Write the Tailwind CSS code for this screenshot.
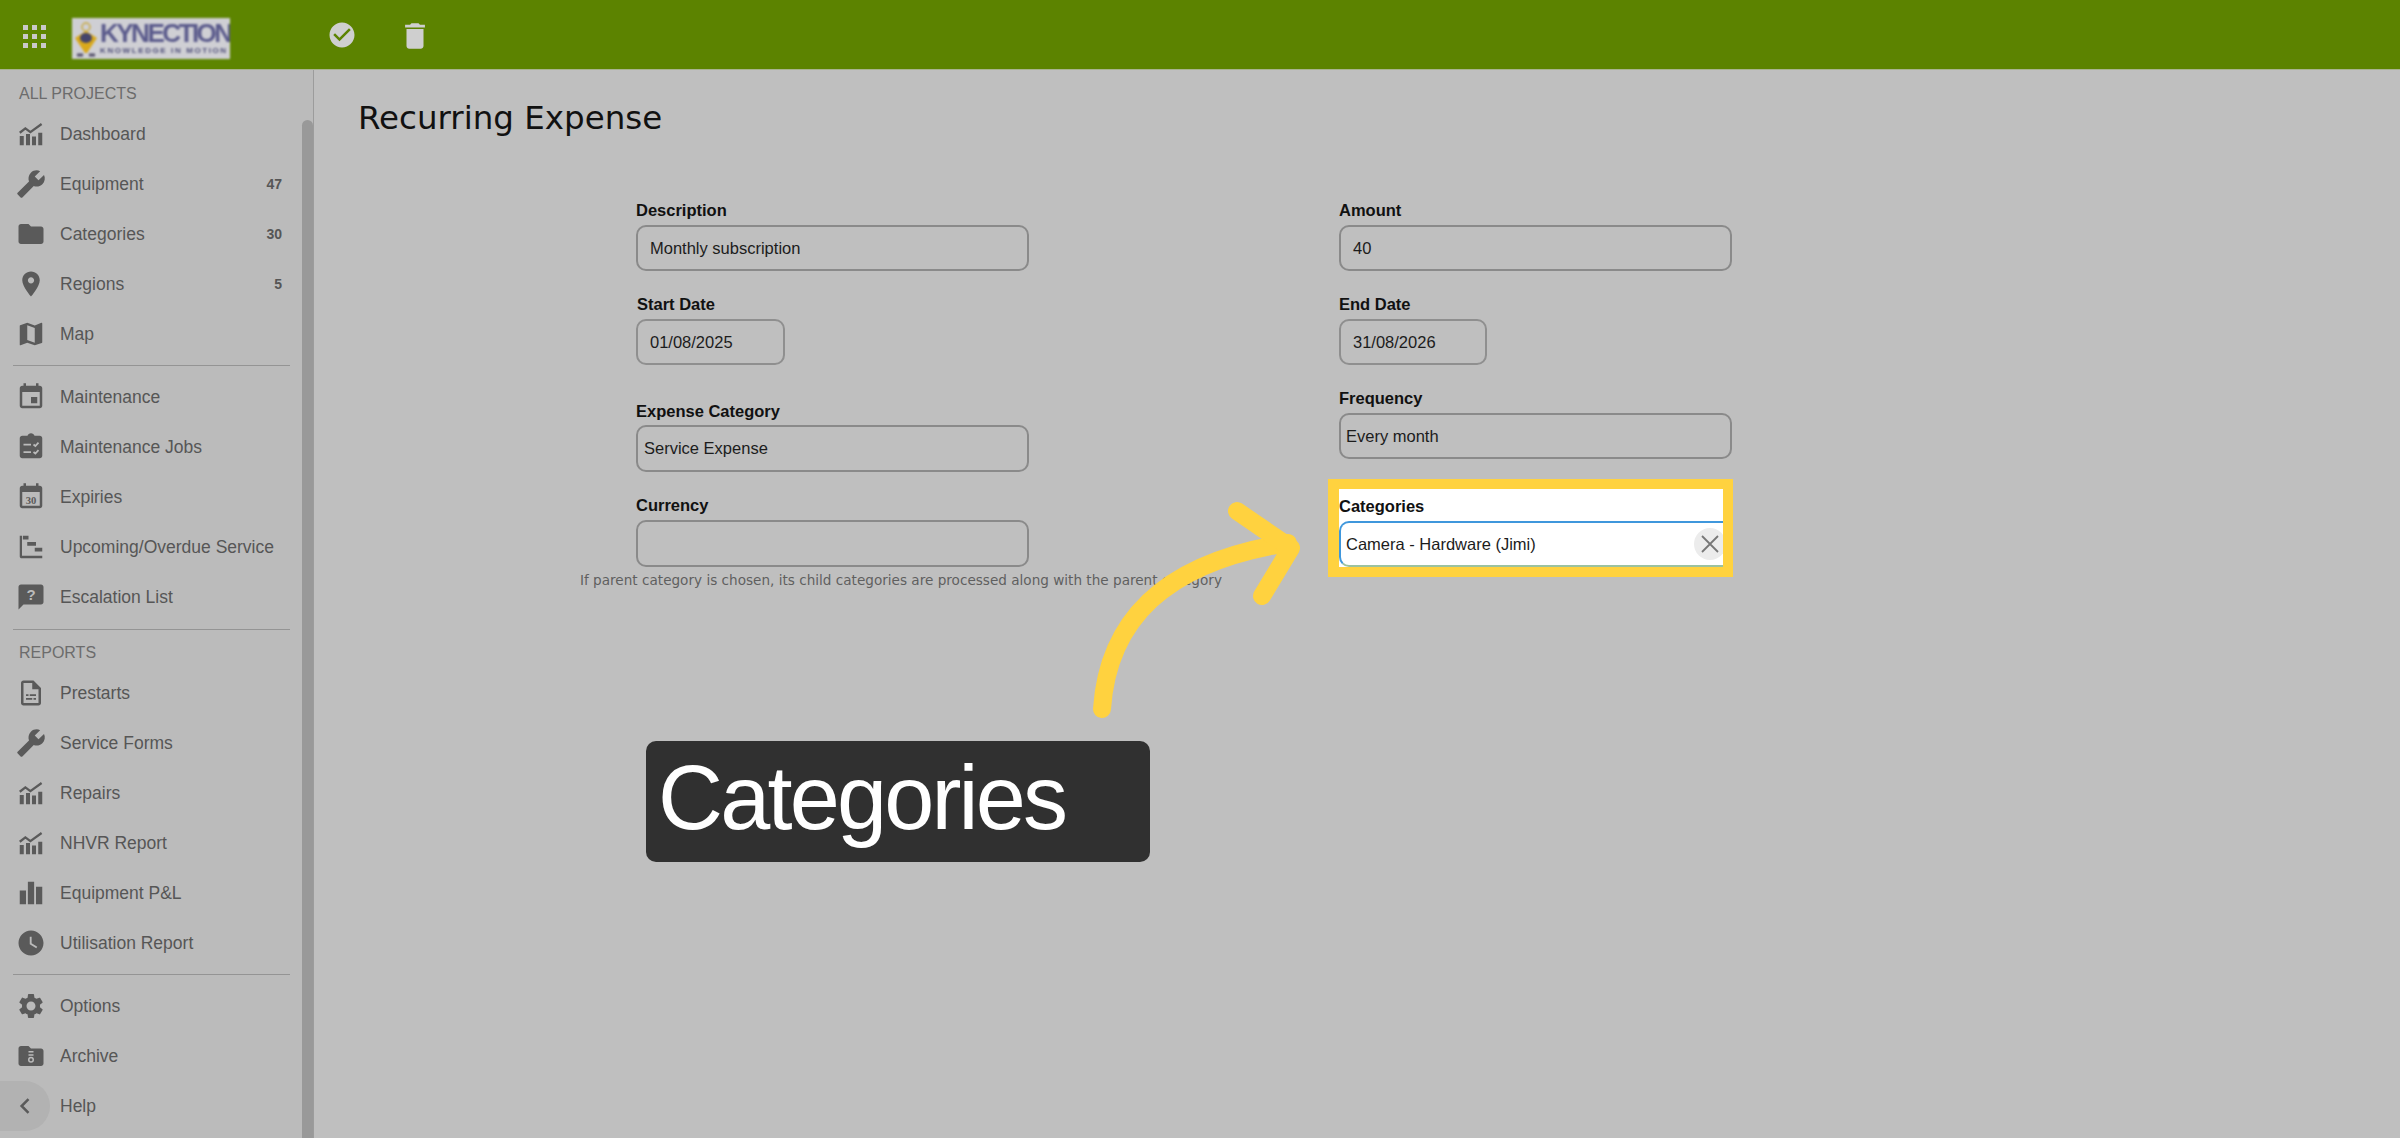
<!DOCTYPE html>
<html lang="en">
<head>
    <meta charset="UTF-8">
    <title>Recurring Expense</title>
    <script src="https://cdn.jsdelivr.net/npm/@tailwindcss/browser@4"></script>
</head>
<body class="font-['Liberation_Sans',Arial,sans-serif]">
<div class="relative flex h-[1138px] w-[2400px] flex-col overflow-hidden bg-[#bfbfbf]">

    <!-- top bar -->
    <header class="flex h-[70px] shrink-0 items-center border-b border-[#a9b38f] bg-[#5c8300]">
        <div class="flex h-full w-[290px] items-center bg-[#5d8500]">
            <svg class="mt-[3px] ml-[23px] h-[23px] w-[23px]" viewBox="0 0 23 23" fill="#c9c9c9">
                <rect x="0" y="0" width="5" height="5"/><rect x="9" y="0" width="5" height="5"/><rect x="18" y="0" width="5" height="5"/>
                <rect x="0" y="9" width="5" height="5"/><rect x="9" y="9" width="5" height="5"/><rect x="18" y="9" width="5" height="5"/>
                <rect x="0" y="18" width="5" height="5"/><rect x="9" y="18" width="5" height="5"/><rect x="18" y="18" width="5" height="5"/>
            </svg>
            <div class="mt-[7px] ml-[26px] flex h-[41px] w-[158px] items-center overflow-hidden bg-[#cfcfd4] blur-[1px]">
                <svg class="ml-[1px] h-[38px] w-[26px] shrink-0" viewBox="0 0 26 38">
                    <circle cx="13" cy="8" r="4" fill="none" stroke="#c9a93c" stroke-width="1.5"/>
                    <path d="M2 19 L13 12 L24 19 L14 34 L12 34 Z" fill="#d9a91c"/>
                    <ellipse cx="13" cy="19" rx="6" ry="5" fill="#45456b"/>
                    <path d="M4 36h6M16 36h6" stroke="#55506a" stroke-width="3"/>
                </svg>
                <div class="ml-[1px] flex flex-col">
                    <span class="text-[26px] leading-[25px] font-bold tracking-[-2.5px] whitespace-nowrap text-[#5b5b8c]">KYNECTION</span>
                    <span class="text-[8px] leading-[9px] font-bold tracking-[1.6px] whitespace-nowrap text-[#4d4d78]">KNOWLEDGE IN MOTION</span>
                </div>
            </div>
        </div>
        <svg class="ml-[37px] h-[30px] w-[30px]" viewBox="0 0 24 24" fill="#cfcfcf"><path d="M12 2C6.48 2 2 6.48 2 12s4.48 10 10 10 10-4.48 10-10S17.52 2 12 2zm-2 15l-5-5 1.41-1.41L10 14.17l7.59-7.59L19 8l-9 9z"/></svg>
        <svg class="mt-[3px] ml-[41px] h-[34px] w-[34px]" viewBox="0 0 24 24" fill="#cfcfcf"><path d="M6 19c0 1.1.9 2 2 2h8c1.1 0 2-.9 2-2V7H6v12zM19 4h-3.5l-1-1h-5l-1 1H5v2h14V4z"/></svg>
    </header>

    <div class="flex min-h-0 flex-1">

        <!-- sidebar -->
        <aside class="relative h-full w-[314px] shrink-0 border-r border-[#9c9c9c] bg-[#bbbbbb] text-[17.5px] text-[#565656]">
            <div class="absolute top-[50px] right-0 bottom-0 w-[11px] rounded-t-[6px] bg-[#999999]"></div>

            <div class="flex h-[39px] items-end pl-[19px] text-[16px] leading-[30px] text-[#6c6c6c]">ALL PROJECTS</div>

            <div class="flex h-[50px] items-center pl-[16px]">
                <svg class="h-[30px] w-[30px]" viewBox="0 0 24 24" fill="#5a5a5a"><path d="M3 13.500h3.200V21H3zM8 12h3.200v9H8zM12.800 14H16v7h-3.200zM17.800 11H21v10h-3.200z"/><path d="M3 11l4.500-3.500 4 3L20.500 4" fill="none" stroke="#5a5a5a" stroke-width="1.800"/></svg>
                <span class="ml-[14px]">Dashboard</span>
            </div>
            <div class="flex h-[50px] items-center pl-[16px]">
                <svg class="h-[30px] w-[30px] -scale-x-100" viewBox="0 0 24 24" fill="#5a5a5a"><path d="M22.700 19l-9.100-9.100c.9-2.300.4-5-1.500-6.900-2-2-5-2.400-7.400-1.300L9 6 6 9 1.600 4.700C.4 7.100.9 10.100 2.900 12.100c1.900 1.900 4.600 2.400 6.900 1.500l9.100 9.100c.4.4 1 .4 1.400 0l2.300-2.300c.5-.4.5-1.100.1-1.400z"/></svg>
                <span class="ml-[14px]">Equipment</span>
                <span class="mr-[31px] ml-auto text-[14px] font-bold">47</span>
            </div>
            <div class="flex h-[50px] items-center pl-[16px]">
                <svg class="h-[30px] w-[30px]" viewBox="0 0 24 24" fill="#5a5a5a"><path d="M10 4H4c-1.100 0-1.990.9-1.990 2L2 18c0 1.100.9 2 2 2h16c1.100 0 2-.9 2-2V8c0-1.100-.9-2-2-2h-8l-2-2z"/></svg>
                <span class="ml-[14px]">Categories</span>
                <span class="mr-[31px] ml-auto text-[14px] font-bold">30</span>
            </div>
            <div class="flex h-[50px] items-center pl-[16px]">
                <svg class="h-[30px] w-[30px]" viewBox="0 0 24 24" fill="#5a5a5a"><path d="M12 2C8.130 2 5 5.130 5 9c0 5.250 7 13 7 13s7-7.750 7-13c0-3.870-3.130-7-7-7zm0 9.500c-1.380 0-2.500-1.120-2.500-2.500s1.120-2.500 2.500-2.500 2.500 1.120 2.500 2.500-1.120 2.500-2.500 2.500z"/></svg>
                <span class="ml-[14px]">Regions</span>
                <span class="mr-[31px] ml-auto text-[14px] font-bold">5</span>
            </div>
            <div class="flex h-[50px] items-center pl-[16px]">
                <svg class="h-[30px] w-[30px]" viewBox="0 0 24 24" fill="#5a5a5a"><path d="M20.500 3l-.16.03L15 5.100 9 3 3.360 4.900c-.21.07-.36.25-.36.48V20.500c0 .28.22.5.5.5l.16-.03L9 18.900l6 2.100 5.640-1.900c.21-.07.36-.25.36-.48V3.500c0-.28-.22-.5-.5-.5zM15 19l-6-2.110V5l6 2.110V19z"/></svg>
                <span class="ml-[14px]">Map</span>
            </div>

            <div class="mt-[6px] ml-[13px] h-px w-[277px] bg-[#949494]"></div>

            <div class="mt-[6px] flex h-[50px] items-center pl-[16px]">
                <svg class="h-[30px] w-[30px]" viewBox="0 0 24 24" fill="#5a5a5a"><path d="M17 12h-5v5h5v-5zM16 1v2H8V1H6v2H5c-1.110 0-1.990.9-1.990 2L3 19c0 1.100.89 2 2 2h14c1.100 0 2-.9 2-2V5c0-1.100-.9-2-2-2h-1V1h-2zm3 18H5V8h14v11z"/></svg>
                <span class="ml-[14px]">Maintenance</span>
            </div>
            <div class="flex h-[50px] items-center pl-[16px]">
                <svg class="h-[30px] w-[30px]" viewBox="0 0 24 24" fill="#5a5a5a"><path d="M19 3h-4.180C14.400 1.840 13.300 1 12 1c-1.300 0-2.400.84-2.820 2H5c-1.100 0-2 .9-2 2v14c0 1.100.9 2 2 2h14c1.100 0 2-.9 2-2V5c0-1.100-.9-2-2-2z"/><path d="M6 10h6M6 16h6M14 10l1.500 1.200L18 8.500M14 16l1.500 1.200L18 14.500" fill="none" stroke="#bbbbbb" stroke-width="1.400"/></svg>
                <span class="ml-[14px]">Maintenance Jobs</span>
            </div>
            <div class="flex h-[50px] items-center pl-[16px]">
                <svg class="h-[30px] w-[30px]" viewBox="0 0 24 24" fill="#5a5a5a"><path d="M16 1v2H8V1H6v2H5c-1.110 0-1.990.9-1.990 2L3 19c0 1.100.89 2 2 2h14c1.100 0 2-.9 2-2V5c0-1.100-.9-2-2-2h-1V1h-2zm3 18H5V8h14v11z"/><text x="12" y="17.800" text-anchor="middle" font-size="8.500" font-weight="700" font-family="Liberation Serif">30</text></svg>
                <span class="ml-[14px]">Expiries</span>
            </div>
            <div class="flex h-[50px] items-center pl-[16px]">
                <svg class="h-[30px] w-[30px]" viewBox="0 0 24 24" fill="#5a5a5a"><path d="M3 3h1.800v16H21v2H4.500C3.700 21 3 20.300 3 19.500zM5.500 3H10v3H5.500zM9 8h7v3H9zM15 12.500h6v3h-6z"/></svg>
                <span class="ml-[14px]">Upcoming/Overdue Service</span>
            </div>
            <div class="flex h-[50px] items-center pl-[16px]">
                <svg class="h-[30px] w-[30px]" viewBox="0 0 24 24" fill="#5a5a5a"><path d="M20 2H4c-1.100 0-2 .9-2 2v18l4-4h14c1.100 0 2-.9 2-2V4c0-1.100-.9-2-2-2z"/><text x="12" y="14.500" text-anchor="middle" font-size="12" font-weight="700" fill="#bbbbbb" font-family="Liberation Sans">?</text></svg>
                <span class="ml-[14px]">Escalation List</span>
            </div>

            <div class="mt-[7px] ml-[13px] h-px w-[277px] bg-[#949494]"></div>

            <div class="flex h-[38px] items-end pl-[19px] text-[16px] leading-[31px] text-[#6c6c6c]">REPORTS</div>

            <div class="flex h-[50px] items-center pl-[16px]">
                <svg class="h-[30px] w-[30px]" viewBox="0 0 24 24" fill="#5a5a5a"><path d="M14 2H6c-1.100 0-2 .9-2 2v16c0 1.100.9 2 2 2h12c1.100 0 2-.9 2-2V8l-6-6zm4 18H6V4h7v5h5v11z"/><path d="M8 13h2v1.300H8zM11 13h5v1.300h-5zM8 16h5v1.300H8zM14 16h2v1.300h-2z"/></svg>
                <span class="ml-[14px]">Prestarts</span>
            </div>
            <div class="flex h-[50px] items-center pl-[16px]">
                <svg class="h-[30px] w-[30px] -scale-x-100" viewBox="0 0 24 24" fill="#5a5a5a"><path d="M22.700 19l-9.100-9.100c.9-2.300.4-5-1.500-6.900-2-2-5-2.400-7.400-1.300L9 6 6 9 1.600 4.700C.4 7.100.9 10.100 2.900 12.100c1.900 1.900 4.600 2.400 6.900 1.500l9.100 9.100c.4.4 1 .4 1.400 0l2.300-2.300c.5-.4.5-1.100.1-1.400z"/></svg>
                <span class="ml-[14px]">Service Forms</span>
            </div>
            <div class="flex h-[50px] items-center pl-[16px]">
                <svg class="h-[30px] w-[30px]" viewBox="0 0 24 24" fill="#5a5a5a"><path d="M3 13.500h3.200V21H3zM8 12h3.200v9H8zM12.800 14H16v7h-3.200zM17.800 11H21v10h-3.200z"/><path d="M3 11l4.500-3.500 4 3L20.500 4" fill="none" stroke="#5a5a5a" stroke-width="1.800"/></svg>
                <span class="ml-[14px]">Repairs</span>
            </div>
            <div class="flex h-[50px] items-center pl-[16px]">
                <svg class="h-[30px] w-[30px]" viewBox="0 0 24 24" fill="#5a5a5a"><path d="M3 13.500h3.200V21H3zM8 12h3.200v9H8zM12.800 14H16v7h-3.200zM17.800 11H21v10h-3.200z"/><path d="M3 11l4.500-3.500 4 3L20.500 4" fill="none" stroke="#5a5a5a" stroke-width="1.800"/></svg>
                <span class="ml-[14px]">NHVR Report</span>
            </div>
            <div class="flex h-[50px] items-center pl-[16px]">
                <svg class="h-[30px] w-[30px]" viewBox="0 0 24 24" fill="#5a5a5a"><path d="M3 10h5v11H3zM9.500 3h5v18h-5zM16 7h5v14h-5z"/></svg>
                <span class="ml-[14px]">Equipment P&amp;L</span>
            </div>
            <div class="flex h-[50px] items-center pl-[16px]">
                <svg class="h-[30px] w-[30px]" viewBox="0 0 24 24" fill="#5a5a5a"><path d="M12 2C6.500 2 2 6.500 2 12s4.500 10 10 10 10-4.500 10-10S17.500 2 12 2zm4.200 14.200L11 13V7h1.500v5.200l4.500 2.700-.8 1.300z"/></svg>
                <span class="ml-[14px]">Utilisation Report</span>
            </div>

            <div class="mt-[6px] ml-[13px] h-px w-[277px] bg-[#949494]"></div>

            <div class="mt-[6px] flex h-[50px] items-center pl-[16px]">
                <svg class="h-[30px] w-[30px]" viewBox="0 0 24 24" fill="#5a5a5a"><path d="M19.140 12.940c.04-.3.06-.61.06-.94 0-.32-.02-.64-.07-.94l2.030-1.580c.18-.14.23-.41.12-.61l-1.920-3.320c-.12-.22-.37-.29-.59-.22l-2.390.96c-.5-.38-1.030-.7-1.620-.94l-.36-2.540c-.04-.24-.24-.41-.48-.41h-3.840c-.24 0-.43.17-.47.41l-.36 2.540c-.59.24-1.130.57-1.620.94l-2.390-.96c-.22-.08-.47 0-.59.22L2.740 8.870c-.12.21-.08.47.12.61l2.030 1.580c-.05.3-.09.63-.09.94s.02.64.07.94l-2.030 1.580c-.18.14-.23.41-.12.61l1.920 3.320c.12.22.37.29.59.22l2.390-.96c.5.38 1.030.7 1.620.94l.36 2.540c.05.24.24.41.48.41h3.840c.24 0 .44-.17.47-.41l.36-2.540c.59-.24 1.130-.56 1.620-.94l2.390.96c.22.08.47 0 .59-.22l1.920-3.320c.12-.22.07-.47-.12-.61l-2.010-1.580zM12 15.600c-1.980 0-3.600-1.620-3.600-3.600s1.620-3.600 3.600-3.600 3.600 1.620 3.600 3.600-1.620 3.600-3.600 3.600z"/></svg>
                <span class="ml-[14px]">Options</span>
            </div>
            <div class="flex h-[50px] items-center pl-[16px]">
                <svg class="h-[30px] w-[30px]" viewBox="0 0 24 24" fill="#5a5a5a"><path d="M10 4H4c-1.100 0-1.990.9-1.990 2L2 18c0 1.100.9 2 2 2h16c1.100 0 2-.9 2-2V8c0-1.100-.9-2-2-2h-8l-2-2z"/><path d="M10 8h4v1.200h-4zM10 10.500h4v1.200h-4z" fill="#bbbbbb"/><circle cx="12" cy="15" r="1.800" fill="none" stroke="#bbbbbb" stroke-width="1.200"/></svg>
                <span class="ml-[14px]">Archive</span>
            </div>
            <div class="relative flex h-[50px] items-center pl-[16px]">
                <div class="absolute top-0 left-0 flex h-[50px] w-[50px] items-center rounded-r-full bg-[#b2b2b2] pl-[16px]">
                    <svg class="h-[30px] w-[30px]" viewBox="0 0 24 24" fill="none" stroke="#5a5a5a" stroke-width="2"><path d="M10 6.500L4.500 12l5.500 5.500"/></svg>
                </div>
                <span class="relative ml-[44px]">Help</span>
            </div>
        </aside>

        <!-- form -->
        <main class="min-w-0 flex-1 pl-[44px]">
            <h1 class="mt-[28px] text-[32.5px] leading-[40px] text-[#111111] font-['DejaVu_Sans',sans-serif]">Recurring Expense</h1>

            <div class="mt-[61px] ml-[278px] flex text-[16.5px] text-[#1c1c1c]">
                <div class="w-[393px]">
                    <div class="h-[20px] font-bold leading-[22px] text-[#111111]">Description</div>
                    <div class="mt-[6px] flex h-[46px] items-center rounded-[10px] border-2 border-[#8a8a8a] pl-[12px]">Monthly subscription</div>
                    <div class="mt-[22px] ml-px h-[26px] font-bold leading-[23px] text-[#111111]">Start Date</div>
                    <div class="flex h-[46px] w-[149px] items-center rounded-[10px] border-2 border-[#8f8f8f] pl-[12px]">01/08/2025</div>
                    <div class="mt-[34px] h-[26px] font-bold leading-[24px] text-[#111111]">Expense Category</div>
                    <div class="flex h-[47px] items-center rounded-[10px] border-2 border-[#8a8a8a] pl-[6px]">Service Expense</div>
                    <div class="mt-[22px] h-[26px] font-bold leading-[23px] text-[#111111]">Currency</div>
                    <div class="h-[47px] rounded-[10px] border-2 border-[#8a8a8a]"></div>
                    <p class="mt-[4px] -ml-[56px] text-[13.6px] leading-[18px] whitespace-nowrap text-[#5f5f5f] font-['DejaVu_Sans',sans-serif]">If parent category is chosen, its child categories are processed along with the parent category</p>
                </div>

                <div class="ml-[310px] w-[393px]">
                    <div class="h-[20px] font-bold leading-[22px] text-[#111111]">Amount</div>
                    <div class="mt-[6px] flex h-[46px] items-center rounded-[10px] border-2 border-[#8a8a8a] pl-[12px]">40</div>
                    <div class="mt-[22px] h-[26px] font-bold leading-[23px] text-[#111111]">End Date</div>
                    <div class="flex h-[46px] w-[148px] items-center rounded-[10px] border-2 border-[#8f8f8f] pl-[12px]">31/08/2026</div>
                    <div class="mt-[22px] h-[26px] font-bold leading-[23px] text-[#111111]">Frequency</div>
                    <div class="flex h-[46px] items-center rounded-[10px] border-2 border-[#8a8a8a] pl-[5px]">Every month</div>

                    <div class="mt-[20px] -ml-[11px] h-[98px] w-[405px] overflow-hidden border-y-[10px] border-r-[10px] border-l-[11px] border-[#ffd23f] bg-white">
                        <div class="h-[32px] pt-[4px] font-bold leading-[26px] text-[#111111]">Categories</div>
                        <div class="relative flex h-[46px] w-[400px] items-center rounded-[10px] border-2 border-[#3f97dc] border-b-[#9cc2a0] pl-[5px]">
                            Camera - Hardware (Jimi)
                            <div class="absolute top-[5px] left-[353px] flex h-[32px] w-[32px] items-center justify-center rounded-full bg-[#ececec]">
                                <svg class="h-[20px] w-[20px]" viewBox="0 0 20 20" stroke="#777777" stroke-width="1.8"><path d="M2 2l16 16M18 2L2 18"/></svg>
                            </div>
                        </div>
                    </div>
                </div>
            </div>
        </main>
    </div>

    <!-- annotation over the page -->
    <svg class="absolute top-0 left-0 h-[1138px] w-[2400px]" viewBox="0 0 2400 1138" fill="none" stroke="#ffd23f" stroke-width="18" stroke-linecap="round" stroke-linejoin="round">
        <path d="M1102 709C1108 620 1165 562 1288 543"/>
        <path d="M1237 511L1291 548L1262 596"/>
    </svg>
    <div class="absolute top-[741px] left-[646px] flex h-[121px] w-[504px] items-center rounded-[10px] bg-[#303030] pb-[6px] pl-[12px] text-[90px] tracking-[-2.8px] text-white">Categories</div>
</div>
</body>
</html>
